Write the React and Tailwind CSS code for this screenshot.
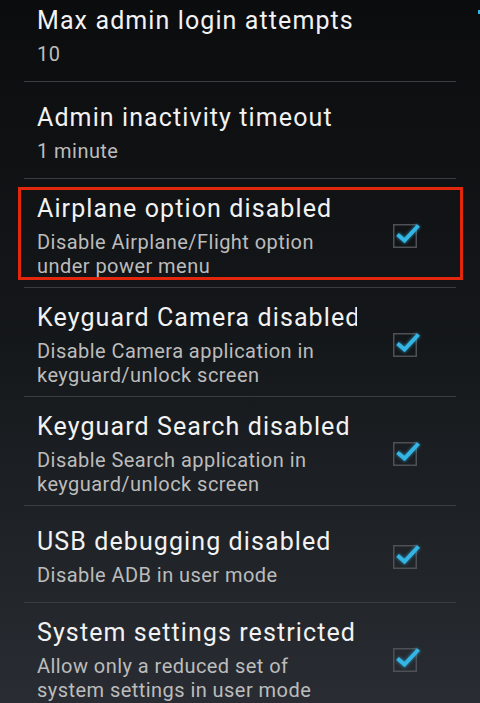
import React from "react";

const prefs = [
  { title: "Max admin login attempts", summary: "10" },
  { title: "Admin inactivity timeout", summary: "1 minute" },
  {
    title: "Airplane option disabled",
    summary: "Disable Airplane/Flight option under power menu",
    checked: true,
    highlight: true,
  },
  {
    title: "Keyguard Camera disabled",
    summary: "Disable Camera application in keyguard/unlock screen",
    checked: true,
  },
  {
    title: "Keyguard Search disabled",
    summary: "Disable Search application in keyguard/unlock screen",
    checked: true,
  },
  { title: "USB debugging disabled", summary: "Disable ADB in user mode", checked: true },
  {
    title: "System settings restricted",
    summary: "Allow only a reduced set of system settings in user mode",
    checked: true,
  },
];

function HoloCheckbox() {
  return (
    <svg width="32" height="32" viewBox="0 0 32 32" className="shrink-0 overflow-visible">
      <defs>
        <filter id="glow" x="-50%" y="-50%" width="200%" height="200%">
          <feGaussianBlur stdDeviation="1.6" />
        </filter>
      </defs>
      <rect x="3.75" y="4.75" width="22.5" height="22.5" fill="none" stroke="#4d5055" strokeWidth="1.5" />
      <path d="M7.5 14.5 L14.5 20.5 L28.5 5.5" fill="none" stroke="#33b5e5" strokeWidth="5" strokeLinejoin="miter" opacity="0.55" filter="url(#glow)" />
      <path d="M7.5 14.5 L14.5 20.5 L28.5 5.5" fill="none" stroke="#33b5e5" strokeWidth="4" strokeLinejoin="miter" />
    </svg>
  );
}

function PrefRow({ title, summary, checked, highlight }) {
  return (
    <div className="relative flex min-h-[97px] items-center border-b border-[#393c41] pl-[13px] pt-[14px] pb-[9px]">
      <div className="w-[320px] overflow-hidden">
        <div className="whitespace-nowrap text-[25px] leading-[32px] tracking-[1.1px] text-[#f2f2f2]">{title}</div>
        <div className="mt-[5px] text-[20px] leading-[24px] tracking-[0.45px] text-[#bcbcbc]">{summary}</div>
      </div>
      {checked && (
        <div className="ml-[33px]">
          <HoloCheckbox />
        </div>
      )}
      {highlight && (
        <div className="pointer-events-none absolute top-[8px] bottom-[7px] left-[-6px] right-[-7px] border-[3px] border-[#e3270d]" />
      )}
    </div>
  );
}

export default function App() {
  return (
    <div
      className="relative h-[703px] w-[480px] overflow-hidden bg-linear-to-b from-[#0b0c0d] via-[#15181b] to-[#292d33]"
      style={{ fontFamily: "Roboto, 'Noto Sans', sans-serif" }}
    >
      <div className="-mt-[15px] px-[24px]">
        {prefs.map((p) => (
          <PrefRow key={p.title} {...p} />
        ))}
      </div>
      {/* scroll indicator */}
      <div className="absolute right-0 top-[10px] h-[4px] w-[2px] bg-[#33b5e5]" />
    </div>
  );
}
